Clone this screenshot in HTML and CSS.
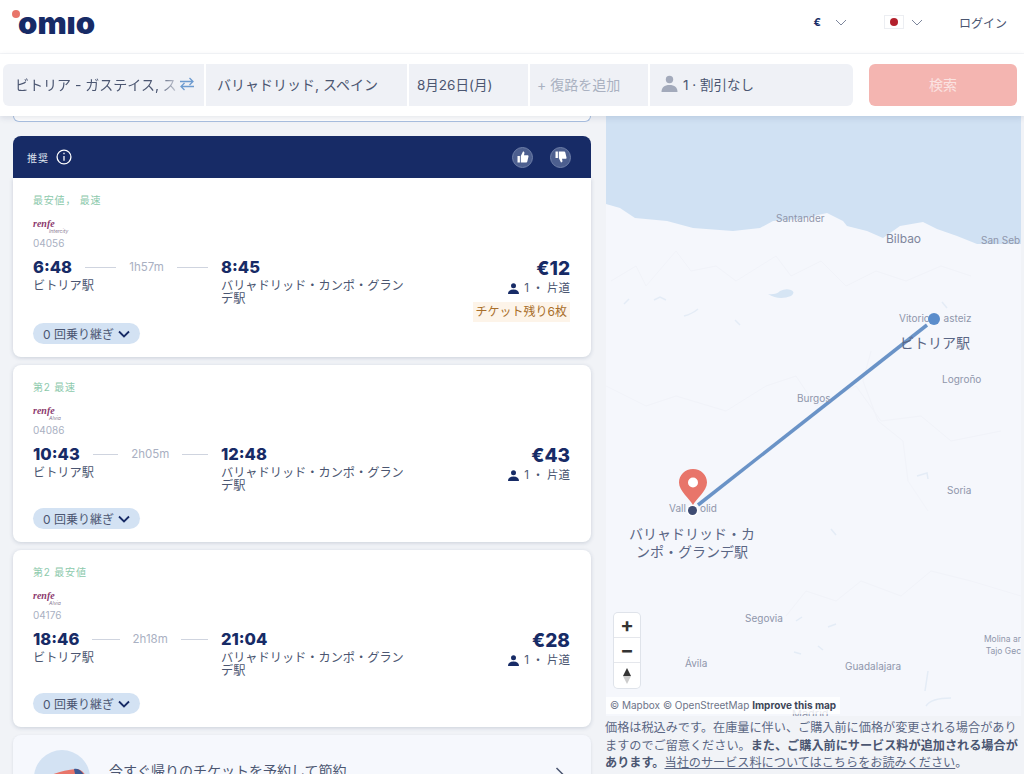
FILE: index.html
```html
<!DOCTYPE html>
<html lang="ja">
<head>
    <meta charset="UTF-8">
    <meta name="viewport" content="width=device-width, initial-scale=1.0">
    <title>Omio</title>
    <link rel="stylesheet" href="styles.css">
</head>
<body>
    <header class="topbar">
        <div class="logo"><span class="logo-dot"></span>omıo</div>
        <div class="topbar-right">
            <span class="currency">€</span>
            <svg class="chevron chevron-currency" width="12" height="7" viewBox="0 0 12 7"><path d="M1 1l5 5 5-5"/></svg>
            <span class="flag"><span class="flag-sun"></span></span>
            <svg class="chevron chevron-flag" width="12" height="7" viewBox="0 0 12 7"><path d="M1 1l5 5 5-5"/></svg>
            <span class="login">ログイン</span>
        </div>
    </header>

    <div class="searchbar">
        <div class="search-fields">
            <div class="field field-from">
                <span class="from-text">ビトリア - ガステイス, スペイン</span>
                <svg class="swap" width="16" height="14" viewBox="0 0 16 14"><path d="M1 4.500h13M10.500 1L14 4.500 10.500 8M15 9.500H2M5.500 6L2 9.500 5.500 13"/></svg>
            </div>
            <div class="field field-to">バリャドリッド, スペイン</div>
            <div class="field field-date">8月26日(月)</div>
            <div class="field field-return">+ 復路を追加</div>
            <div class="field field-pax">
                <svg width="17" height="17" viewBox="0 0 17 17"><circle cx="8.500" cy="4.500" r="3.700"/><path d="M0.500 17c0-4.500 3-7 8-7s8 2.500 8 7z"/></svg>
                <span>1 · 割引なし</span>
            </div>
        </div>
        <div class="search-btn">検索</div>
    </div>

    <main class="content">
        <section class="results">
            <div class="stub"></div>

            <div class="recommended-head">
                <span class="rec-label">推奨</span>
                <svg class="rec-info" width="16" height="16" viewBox="0 0 15 15"><circle cx="7.500" cy="7.500" r="6.500"/><path d="M7.500 6.500v4.500M7.500 3.600v1.400"/></svg>
                <span class="thumbs">
                    <span class="thumb">
                        <svg width="12" height="12" viewBox="0 0 12 12"><path d="M0.500 5h2.400v6.500H0.500zM3.800 5L6 0.500c1 0 1.600 0.700 1.400 1.700L7 4.300h3.500c0.800 0 1.200 0.600 1 1.300l-1.200 5c-0.200 0.600-0.500 0.900-1.100 0.900H3.800z"/></svg>
                    </span>
                    <span class="thumb">
                        <svg width="12" height="12" viewBox="0 0 12 12"><path d="M0.500 7h2.400V0.500H0.500zM3.800 7L6 11.500c1 0 1.600-0.700 1.400-1.700L7 7.700h3.500c0.800 0 1.200-0.600 1-1.300l-1.200-5C10.100 0.800 9.800 0.500 9.200 0.500H3.800z"/></svg>
                    </span>
                </span>
            </div>

            <article class="card card-first">
                <div class="tag">最安値， 最速</div>
                <div class="brand"><span class="brand-name">renfe</span><span class="brand-sub">Intercity</span></div>
                <div class="train-no">04056</div>
                <div class="journey">
                    <div>
                        <div class="time-row"><b class="time">6:48</b><i></i><span class="duration">1h57m</span><i></i></div>
                        <div class="station">ビトリア駅</div>
                    </div>
                    <div>
                        <b class="time">8:45</b>
                        <div class="station">バリャドリッド・カンポ・グランデ駅</div>
                    </div>
                    <div class="price-col">
                        <b class="price">€12</b>
                        <div class="fare"><svg width="11" height="11" viewBox="0 0 11 11"><circle cx="5.500" cy="2.800" r="2.500"/><path d="M0 11c0-3 2-4.500 5.500-4.500S11 8 11 11z"/></svg>1 ・ 片道</div>
                        <div class="seats-left">チケット残り6枚</div>
                    </div>
                </div>
                <div class="changes changes-first">0 回乗り継ぎ<svg width="12" height="8" viewBox="0 0 12 8"><path d="M1 1.500l5 5 5-5"/></svg></div>
            </article>

            <article class="card">
                <div class="tag">第2 最速</div>
                <div class="brand"><span class="brand-name">renfe</span><span class="brand-sub">Alvia</span></div>
                <div class="train-no">04086</div>
                <div class="journey">
                    <div>
                        <div class="time-row"><b class="time">10:43</b><i></i><span class="duration">2h05m</span><i></i></div>
                        <div class="station">ビトリア駅</div>
                    </div>
                    <div>
                        <b class="time">12:48</b>
                        <div class="station">バリャドリッド・カンポ・グランデ駅</div>
                    </div>
                    <div class="price-col">
                        <b class="price">€43</b>
                        <div class="fare"><svg width="11" height="11" viewBox="0 0 11 11"><circle cx="5.500" cy="2.800" r="2.500"/><path d="M0 11c0-3 2-4.500 5.500-4.500S11 8 11 11z"/></svg>1 ・ 片道</div>
                    </div>
                </div>
                <div class="changes">0 回乗り継ぎ<svg width="12" height="8" viewBox="0 0 12 8"><path d="M1 1.500l5 5 5-5"/></svg></div>
            </article>

            <article class="card">
                <div class="tag">第2 最安値</div>
                <div class="brand"><span class="brand-name">renfe</span><span class="brand-sub">Alvia</span></div>
                <div class="train-no">04176</div>
                <div class="journey">
                    <div>
                        <div class="time-row"><b class="time">18:46</b><i></i><span class="duration">2h18m</span><i></i></div>
                        <div class="station">ビトリア駅</div>
                    </div>
                    <div>
                        <b class="time">21:04</b>
                        <div class="station">バリャドリッド・カンポ・グランデ駅</div>
                    </div>
                    <div class="price-col">
                        <b class="price">€28</b>
                        <div class="fare"><svg width="11" height="11" viewBox="0 0 11 11"><circle cx="5.500" cy="2.800" r="2.500"/><path d="M0 11c0-3 2-4.500 5.500-4.500S11 8 11 11z"/></svg>1 ・ 片道</div>
                    </div>
                </div>
                <div class="changes">0 回乗り継ぎ<svg width="12" height="8" viewBox="0 0 12 8"><path d="M1 1.500l5 5 5-5"/></svg></div>
            </article>

            <div class="promo">
                <svg class="promo-art" width="56" height="56" viewBox="0 0 56 56">
                    <circle cx="28" cy="28" r="28" fill="#d3e2f3"/>
                    <path d="M5 32C14 25 28 20 42 19c5 0 9 4 12 11v26H5z" fill="#e8756a"/>
                    <path d="M40 19c5-1 9 3 13 11l-11-1z" fill="#3d5a94"/>
                </svg>
                <span class="promo-text">今すぐ帰りのチケットを予約して節約</span>
                <svg class="promo-arrow" width="10" height="16" viewBox="0 0 10 16"><path d="M1.500 1l7 7-7 7"/></svg>
            </div>
        </section>

        <aside class="side">
            <div class="map">
                <svg class="map-art" width="415" height="600" viewBox="0 0 415 600">
                    <path class="sea" d="M0 0H415V128L371 128 351 120 331 113 317 106 294 110 277 122 261 115 241 110 237 105 221 97 194 103 167 105 154 112 127 115 87 112 61 105 29 102 14 92 0 88Z"/>
                    <g class="rivers">
                        <path d="M18 188l5-5"/><path d="M48 184l6-3 6 3"/><path d="M78 200q8-2 14-7"/>
                        <path d="M129 204l5 5"/><path d="M336 186l5 6"/><path d="M311 360l10-3 1 6"/>
                        <path d="M225 413l5 6"/><path d="M190 505l6-4"/><path d="M222 511l8-3"/>
                        <path d="M188 536l7 2"/><path d="M212 530l5 4"/><path d="M322 555l-3 20"/><path d="M320 590q5-8 25-8"/>
                    </g>
                    <path class="lake" d="M162 178q8 1 12-3 6-3 11-1t0 6q-12 5-23-2z"/>
                    <g class="borders">
                        <path d="M5 165l25-15 10 20 30-35 15 20 25-5 20 15 40-25 15 20 30-15 25 25 30-15 30 10 35-15 30 10"/>
                        <path d="M0 270l40 20 30-10 50 15 40-25 30-10 20 30 40-20 25 35 40-5 30 25 50-10"/>
                        <path d="M180 500l20-25 30 10 25-20 40 15 30-25 40 10 50 15"/>
                        <path d="M265 235l-8 30 15 40 25 20 5 40 20 30"/>
                    </g>
                    <line class="route" x1="321" y1="209" x2="92" y2="389"/>
                </svg>

                <span class="place place-santander">Santander</span>
                <span class="place place-bilbao">Bilbao</span>
                <span class="place place-sanseb">San Seb</span>
                <span class="place place-vitoria">Vitoric&nbsp;&nbsp;&nbsp;&nbsp;&nbsp;asteiz</span>
                <span class="place place-logrono">Logroño</span>
                <span class="place place-burgos">Burgos</span>
                <span class="place place-valladolid">Vall&nbsp;&nbsp;&nbsp;&nbsp;&nbsp;olid</span>
                <span class="place place-soria">Soria</span>
                <span class="place place-segovia">Segovia</span>
                <span class="place place-avila">Ávila</span>
                <span class="place place-guadalajara">Guadalajara</span>
                <span class="place place-molina">Molina ar<br>Tajo Gec</span>

                <span class="stop-from"></span>
                <span class="stop-to"></span>
                <svg class="pin" width="28" height="36" viewBox="0 0 28 36"><path d="M14 36C11 30 0 22 0 13.500 0 6 6 0 14 0s14 6 14 13.500C28 22 17 30 14 36z" fill="#e8756a"/><circle cx="14" cy="13.500" r="5" fill="#fff"/></svg>
                <span class="map-station map-station-from">ビトリア駅</span>
                <span class="map-station map-station-to">バリャドリッド・カンポ・グランデ駅</span>

                <div class="zoom-ctrl">
                    <span>+</span>
                    <span>−</span>
                    <span><svg width="8" height="16" viewBox="0 0 8 16"><path d="M4 0l4 8H0z" fill="#333"/><path d="M4 16L0 8h8z" fill="#ccc"/></svg></span>
                </div>
                <div class="madrid">Madrid</div>
                <div class="attribution">© Mapbox © OpenStreetMap <b>Improve this map</b></div>
            </div>
            <p class="disclaimer">価格は税込みです。在庫量に伴い、ご購入前に価格が変更される場合がありますのでご留意ください。<b>また、ご購入前にサービス料が追加される場合があります。</b><u>当社のサービス料についてはこちらをお読みください</u>。</p>
        </aside>
    </main>
</body>
</html>
```

FILE: styles.css
```css
:root {
    --navy: #172b66;
    --ink: #4b5671;
    --muted: #a9b0c2;
    --field: #eff1f6;
    --page: #f1f3f7;
    --coral: #e8756a;
}
* {
    box-sizing: border-box;
}
body {
    margin: 0;
    height: 774px;
    overflow: hidden;
    background: var(--page);
    color: var(--ink);
    font-family: Inter, "Noto Sans CJK JP", sans-serif;
}
.topbar {
    height: 54px;
    background: #fff;
    border-bottom: 1px solid #f5f6f8;
    display: flex;
    justify-content: space-between;
    align-items: center;
    padding: 0 17px 9px 13px;
}
.logo {
    position: relative;
    padding-left: 5px;
    margin-top: 2px;
    font-weight: 900;
    font-size: 31px;
    line-height: 30px;
    letter-spacing: 0;
    color: var(--navy);
}
.logo-dot {
    position: absolute;
    left: -1px;
    top: 2px;
    width: 8px;
    height: 8px;
    border-radius: 50%;
    background: var(--coral);
}
.topbar-right {
    display: flex;
    align-items: center;
    font-size: 12px;
}
.currency {
    font-weight: 700;
    font-size: 11px;
    color: var(--navy);
}
.chevron {
    fill: none;
    stroke: #7d869c;
    stroke-width: 1;
}
.chevron-currency {
    margin-left: 14px;
}
.flag {
    width: 20px;
    height: 14px;
    margin-left: 37px;
    background: #fff;
    border: 1px solid #eceef2;
    display: flex;
    align-items: center;
    justify-content: center;
}
.flag-sun {
    width: 8px;
    height: 8px;
    border-radius: 50%;
    background: #b3202c;
}
.chevron-flag {
    margin-left: 7px;
}
.login {
    margin-left: 36px;
    color: var(--ink);
}
.searchbar {
    position: relative;
    z-index: 2;
    height: 62px;
    background: #fff;
    padding: 10px 7px 10px 3px;
    display: flex;
    justify-content: space-between;
    box-shadow: 0 2px 6px rgba(30, 50, 90, 0.12);
}
.search-fields {
    width: 850px;
    display: flex;
    gap: 2px;
    font-size: 14px;
}
.field {
    background: var(--field);
    display: flex;
    align-items: center;
    white-space: nowrap;
    overflow: hidden;
    padding-bottom: 3px;
}
.field-from {
    width: 201px;
    padding-left: 12px;
    border-radius: 6px 0 0 6px;
    position: relative;
}
.from-text {
    width: 162px;
    overflow: hidden;
    -webkit-mask-image: linear-gradient(90deg, #000 145px, rgba(0, 0, 0, 0.2) 162px);
    mask-image: linear-gradient(90deg, #000 145px, rgba(0, 0, 0, 0.2) 162px);
}
.swap {
    position: absolute;
    left: 176px;
    top: 13px;
    fill: none;
    stroke: #6d9bd0;
    stroke-width: 1.300;
}
.field-to {
    width: 201px;
    padding-left: 11px;
}
.field-date {
    width: 119px;
    padding-left: 8px;
    font-size: 13.500px;
}
.field-return {
    width: 118px;
    padding-left: 7px;
    color: #aab1c1;
}
.field-pax {
    flex: 1;
    padding-left: 11px;
    gap: 5px;
    font-size: 13.500px;
    border-radius: 0 6px 6px 0;
}
.field-pax svg {
    fill: #a3aabb;
}
.search-btn {
    width: 148px;
    background: #f4b5b1;
    border-radius: 6px;
    color: #fbe3e1;
    font-size: 14px;
    padding-bottom: 3px;
    display: flex;
    align-items: center;
    justify-content: center;
}
.content {
    display: grid;
    grid-template-columns: 606px 415px;
    height: 658px;
}
.results {
    padding: 0 15px 0 13px;
    overflow: hidden;
}
.stub {
    height: 6px;
    background: #fff;
    border: 1px solid #a9bfe0;
    border-top: 0;
    border-radius: 0 0 6px 6px;
    margin-bottom: 14px;
}
.recommended-head {
    height: 42px;
    background: var(--navy);
    color: #dfe3ee;
    border-radius: 8px 8px 0 0;
    display: flex;
    align-items: center;
    padding: 0 20px 0 14px;
    font-size: 10px;
    letter-spacing: 1px;
}
.rec-info {
    margin-left: 7px;
    fill: none;
    stroke: #fff;
    stroke-width: 1.200;
}
.thumbs {
    margin-left: auto;
    display: flex;
    gap: 17px;
}
.thumb {
    width: 21px;
    height: 21px;
    border-radius: 50%;
    background: #4d5f8f;
    border: 1px solid #6f7fa8;
    display: flex;
    align-items: center;
    justify-content: center;
}
.thumb svg {
    fill: #fff;
}
.card {
    background: #fff;
    border-radius: 8px;
    margin-bottom: 8px;
    padding: 15px 21px 13px 20px;
    box-shadow: 0 1px 4px rgba(30, 50, 90, 0.18);
}
.card-first {
    border-radius: 0 0 8px 8px;
}
.tag {
    font-size: 10px;
    line-height: 14px;
    letter-spacing: 0.8px;
    color: #8cc9ac;
}
.brand {
    margin-top: 11px;
    height: 17px;
    position: relative;
    font-family: "Liberation Serif", serif;
    font-style: italic;
    font-weight: 700;
    font-size: 10px;
    line-height: 11px;
    color: #8c3a6e;
}
.brand-name {
    display: block;
}
.brand-sub {
    position: absolute;
    left: 16px;
    top: 10px;
    font-family: Inter, sans-serif;
    font-weight: 400;
    font-size: 5px;
    line-height: 7px;
    color: #8a7c93;
}
.train-no {
    margin-top: 2px;
    font-size: 10px;
    line-height: 13px;
    color: #a9b0c2;
}
.journey {
    margin-top: 6px;
    display: grid;
    grid-template-columns: 188px 190px 1fr;
    min-height: 44px;
}
.time-row {
    display: flex;
    align-items: center;
    gap: 13px;
    padding-right: 13px;
}
.time-row i {
    flex: 1;
    height: 1px;
    background: #cfd4df;
}
.time {
    font-size: 16.500px;
    line-height: 22px;
    font-weight: 800;
    color: var(--navy);
}
.duration {
    font-size: 11.500px;
    color: var(--muted);
}
.station {
    font-size: 12.200px;
    line-height: 13px;
    margin-top: 1px;
    color: var(--ink);
}
.price-col {
    padding-top: 1px;
    text-align: right;
}
.price {
    font-size: 19px;
    line-height: 23px;
    font-weight: 800;
    color: var(--navy);
}
.fare {
    margin-top: 1px;
    font-size: 11.500px;
    line-height: 14px;
    display: flex;
    justify-content: flex-end;
    align-items: center;
    gap: 5px;
}
.fare svg {
    fill: var(--navy);
}
.seats-left {
    display: inline-block;
    margin-top: 7px;
    padding: 0 3px;
    background: #fdf4e9;
    color: #a96f2b;
    font-size: 12px;
    line-height: 20px;
    white-space: nowrap;
}
.changes {
    margin-top: 16px;
    width: 107px;
    height: 21px;
    border-radius: 11px;
    background: #d3e2f3;
    display: flex;
    align-items: center;
    justify-content: center;
    gap: 4px;
    font-size: 12px;
    white-space: nowrap;
}
.changes-first {
    margin-top: 1px;
}
.changes svg {
    fill: none;
    stroke: var(--navy);
    stroke-width: 1.800;
}
.promo {
    height: 80px;
    background: #f6f8fd;
    border-radius: 8px;
    padding: 15px 26px 0 21px;
    display: flex;
    align-items: flex-start;
    box-shadow: 0 1px 3px rgba(30, 50, 90, 0.12);
    overflow: hidden;
}
.promo-text {
    margin: 10px 0 0 19px;
    font-size: 14px;
}
.promo-arrow {
    margin: 17px 0 0 auto;
    fill: none;
    stroke: var(--ink);
    stroke-width: 1.500;
}
.side {
    display: flex;
    flex-direction: column;
}
.map {
    position: relative;
    height: 600px;
    background: #f5f7fc;
    overflow: hidden;
}
.map-art {
    position: absolute;
    left: 0;
    top: 0;
}
.sea {
    fill: #d0e1f3;
}
.lake {
    fill: #d6e5f4;
}
.rivers path {
    fill: none;
    stroke: #e4ecf6;
    stroke-width: 1.500;
}
.borders path {
    fill: none;
    stroke: #f1f3f9;
}
.route {
    stroke: #6a93c7;
    stroke-width: 3.500;
}
.place {
    position: absolute;
    font-size: 10px;
    line-height: 12px;
    color: #8f96ab;
    white-space: nowrap;
}
.place-santander { left: 170px; top: 96px; }
.place-bilbao { left: 280px; top: 117px; font-size: 12px; color: #7f869c; }
.place-sanseb { left: 375px; top: 118px; }
.place-vitoria { left: 293px; top: 196px; }
.place-logrono { left: 336px; top: 257px; }
.place-burgos { left: 191px; top: 276px; }
.place-valladolid { left: 63px; top: 386px; }
.place-soria { left: 341px; top: 368px; }
.place-segovia { left: 139px; top: 496px; }
.place-avila { left: 79px; top: 541px; }
.place-guadalajara { left: 239px; top: 544px; }
.place-molina { right: 0; top: 517px; font-size: 8.500px; text-align: right; }
.stop-from {
    position: absolute;
    left: 322px;
    top: 197px;
    width: 12px;
    height: 12px;
    border-radius: 50%;
    background: #5b8dcb;
}
.stop-to {
    position: absolute;
    left: 82px;
    top: 390px;
    width: 9px;
    height: 9px;
    border-radius: 50%;
    background: #3f4c73;
    box-shadow: 0 0 0 1.500px #fff;
}
.pin {
    position: absolute;
    left: 73px;
    top: 353px;
}
.map-station {
    position: absolute;
    font-size: 14px;
    line-height: 18px;
    color: #5a6685;
    text-align: center;
}
.map-station-from {
    left: 294px;
    top: 218px;
}
.map-station-to {
    left: 21px;
    top: 409px;
    width: 130px;
}
.zoom-ctrl {
    position: absolute;
    left: 8px;
    top: 497px;
    width: 26px;
    background: #fff;
    border-radius: 4px;
    box-shadow: 0 0 0 1px #dfe3ea;
    display: flex;
    flex-direction: column;
}
.zoom-ctrl span {
    height: 25px;
    display: flex;
    align-items: center;
    justify-content: center;
    font-size: 20px;
    font-weight: 700;
    color: #333;
    border-bottom: 1px solid #e5e7ec;
}
.zoom-ctrl span:last-child {
    border-bottom: 0;
}
.madrid {
    position: absolute;
    left: 186px;
    top: 591px;
    font-size: 11px;
    color: #8f96ab;
}
.attribution {
    position: absolute;
    left: 0;
    top: 581px;
    width: 234px;
    height: 17px;
    padding-left: 4px;
    background: rgba(255, 255, 255, 0.8);
    font-size: 10px;
    line-height: 17px;
    color: #6d7488;
    white-space: nowrap;
}
.attribution b {
    color: #3e4658;
}
.disclaimer {
    margin: 3px 0 0 -1px;
    width: 416px;
    font-size: 12.150px;
    line-height: 17.500px;
    color: #5b6784;
}
.disclaimer b {
    font-weight: 700;
    color: #4b5671;
}
```
